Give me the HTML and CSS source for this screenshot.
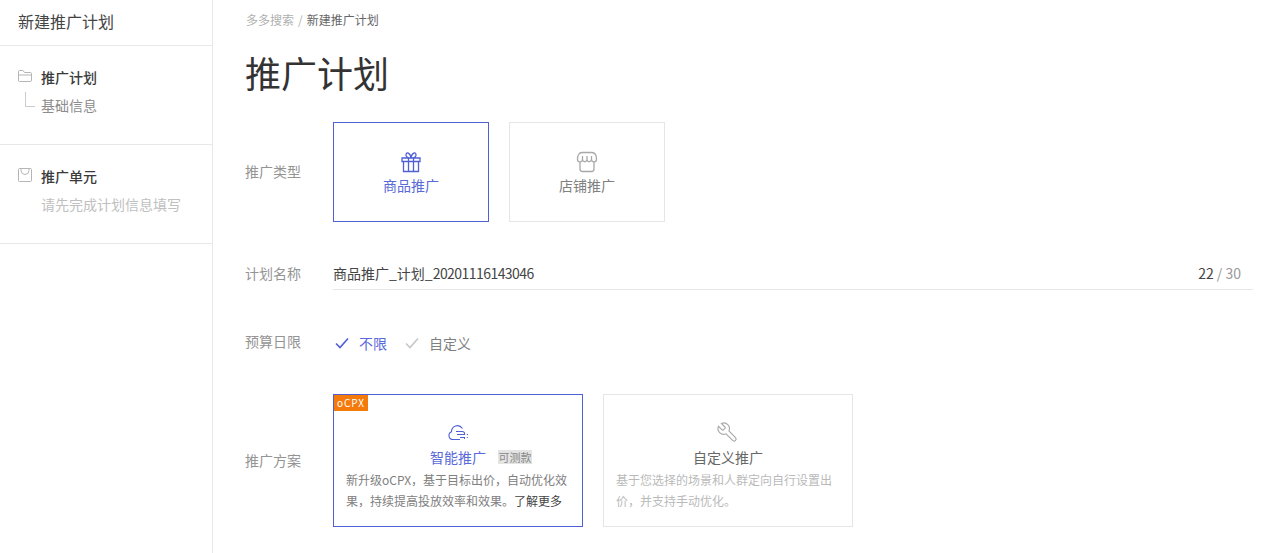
FILE: index.html
```html
<!DOCTYPE html>
<html lang="zh-CN">

<head>
    <meta charset="UTF-8">
    <title>新建推广计划</title>
    <link rel="stylesheet" href="styles.css">
</head>

<body>
    <div class="layout">
        <aside class="sidebar">
            <div class="side-title">新建推广计划</div>
            <div class="side-group">
                <div class="side-row">
                    <svg class="side-icon" viewBox="0 0 14 12" width="14" height="12" fill="none" stroke="#b5b5b5">
                        <path d="M.5 10V1.500Q.5.500 1.500.500H5L6.500 2.500H12.500Q13.500 2.500 13.500 3.500V10Q13.500 11.500 12.500 11.500H1.500Q.5 11.500 .5 10ZM.5 5H13.500" />
                    </svg>
                    <span class="side-name">推广计划</span>
                </div>
                <div class="side-row side-sub">
                    <span class="tree-line"></span>
                    <span class="side-text">基础信息</span>
                </div>
            </div>
            <div class="side-group">
                <div class="side-row">
                    <svg class="side-icon" viewBox="0 0 14 14" width="14" height="14" fill="none" stroke="#b5b5b5">
                        <path d="M1.500.5H12.500Q13.500.5 13.500 1.500V12.500Q13.500 13.500 12.500 13.500H1.500Q.5 13.500 .5 12.500V1.500Q.5.5 1.500.5ZM3 1V2.500Q3.500 6.500 7 6.500T11 2.500V1" />
                    </svg>
                    <span class="side-name">推广单元</span>
                </div>
                <div class="side-row side-sub">
                    <span class="side-text side-hint">请先完成计划信息填写</span>
                </div>
            </div>
        </aside>

        <main class="content">
            <div class="breadcrumb"><span>多多搜索</span><i>/</i><em>新建推广计划</em></div>
            <h1>推广计划</h1>

            <div class="form-row type-row">
                <label>推广类型</label>
                <div class="type-cards">
                    <div class="type-card active">
                        <svg viewBox="0 0 22 22" width="22" height="22" fill="none" stroke="#4f5fd5" stroke-width="1.300">
                            <path d="M2 7H20V10.500H2ZM3.500 10.500V20.500H18.500V10.500M8.500 7V20.500M13.500 7V20.500M11 7C7.500 7 5.500 5.500 6 3.500C6.500 1 10 1 11 7C12 1 15.500 1 16 3.500C16.500 5.500 14.500 7 11 7Z" />
                        </svg>
                        <span>商品推广</span>
                    </div>
                    <div class="type-card">
                        <svg viewBox="0 0 22 22" width="22" height="22" fill="none" stroke="#a8a8a8" stroke-width="1.300">
                            <path d="M6 1.500H16C19 1.500 20.500 4.500 20.500 8.500C20.500 11.500 16 12 15.500 8.500C15 11.500 11.500 11.500 11 8.500C10.500 11.500 7 11.500 6.500 8.500C6 12 1.500 11.500 1.500 8.500C1.500 4.500 3 1.500 6 1.500ZM6.500 8.500V5M11 8.500V5M15.500 8.500V5M4 11V18Q4 20.500 6.500 20.500H15.500Q18 20.500 18 18V11" />
                        </svg>
                        <span>店铺推广</span>
                    </div>
                </div>
            </div>

            <div class="form-row name-row">
                <label>计划名称</label>
                <div class="name-input">
                    <span>商品推广_计划_<span class="digits">20201116143046</span></span>
                    <span class="count"><b>22</b> / 30</span>
                </div>
            </div>

            <div class="form-row budget-row">
                <label>预算日限</label>
                <div class="checks">
                    <div class="check active">
                        <svg viewBox="0 0 14 12" width="14" height="12" fill="none" stroke="#4f5fd5" stroke-width="1.600">
                            <path d="M1 6.500L5 10.500L13 1.500" />
                        </svg>
                        <span>不限</span>
                    </div>
                    <div class="check">
                        <svg viewBox="0 0 14 12" width="14" height="12" fill="none" stroke="#c4c8c8" stroke-width="1.600">
                            <path d="M1 6.500L5 10.500L13 1.500" />
                        </svg>
                        <span>自定义</span>
                    </div>
                </div>
            </div>

            <div class="form-row plan-row">
                <label>推广方案</label>
                <div class="plan-cards">
                    <div class="plan-card active">
                        <span class="badge">oCPX</span>
                        <svg viewBox="0 -3 20 20" width="20" height="20" fill="none" stroke="#4f5fd5" stroke-width="1.100">
                            <path d="M12 15.500H5C.5 15.500-.5 9.500 3.500 7.800C3.500 2.500 10.500-1 14.500 4.500M8 7.500H14C16 7.500 17 8.800 16.500 10.500H9M12 13.500H16.500V15M18.800 10.500H20M18.800 13.500H19.800" />
                        </svg>
                        <div class="plan-title">智能推广<span class="tag">可测款</span></div>
                        <p>新升级oCPX，基于目标出价，自动优化效果，持续提高投放效率和效果。<a>了解更多</a></p>
                    </div>
                    <div class="plan-card">
                        <svg viewBox="2 0 21 21" width="20" height="20" fill="none" stroke="#a8a8a8" stroke-width="1.200">
                            <path transform="matrix(-1 0 0 1 24 0)" d="M14.700 6.300a1 1 0 0 0 0 1.400l1.600 1.600a1 1 0 0 0 1.400 0l3.770-3.770a6 6 0 0 1-7.940 7.940l-6.910 6.910a2.120 2.120 0 0 1-3-3l6.910-6.910a6 6 0 0 1 7.940-7.940l-3.760 3.760z" />
                        </svg>
                        <div class="plan-title">自定义推广</div>
                        <p class="muted">基于您选择的场景和人群定向自行设置出价，并支持手动优化。</p>
                    </div>
                </div>
            </div>
        </main>
    </div>
</body>

</html>
```
FILE: styles.css
```css
* {
    box-sizing: border-box;
}

html,
body {
    height: 100%;
}

body {
    margin: 0;
    overflow: hidden;
    background: #fff;
    color: #666;
    font-family: "Noto Sans CJK SC", "Noto Sans", sans-serif;
    font-size: 14px;
}

.layout {
    display: flex;
    height: 553px;
}

.sidebar {
    width: 213px;
    flex-shrink: 0;
    border-right: 1px solid #e8e8e8;
}

.side-title {
    height: 46px;
    padding: 0 18px;
    line-height: 43px;
    font-size: 16px;
    color: #444;
    border-bottom: 1px solid #e8e8e8;
}

.side-group {
    height: 99px;
    padding-top: 17px;
    border-bottom: 1px solid #e8e8e8;
}

.side-row {
    display: flex;
    align-items: center;
    height: 28px;
    padding-left: 18px;
}

.side-icon {
    width: 14px;
    margin-right: 9px;
    margin-top: -2px;
}

.side-name {
    color: #3a3a3a;
    font-weight: 500;
}

.side-sub {
    position: relative;
    padding-left: 41px;
}

.tree-line {
    position: absolute;
    left: 25px;
    top: 1px;
    width: 10px;
    height: 15px;
    border-left: 1px solid #ccc;
    border-bottom: 1px solid #ccc;
}

.side-text {
    color: #8c8c8c;
}

.side-hint {
    color: #c0c0c0;
}

.content {
    flex: 1;
    padding: 0 31px 0 32px;
}

.breadcrumb {
    height: 40px;
    padding: 11px 0 0 1px;
    font-size: 12px;
    line-height: 17px;
    color: #b0b0b0;
}

.breadcrumb i {
    font-style: normal;
    margin: 0 4px;
}

.breadcrumb em {
    font-style: normal;
    color: #666;
}

h1 {
    margin: 0;
    height: 82px;
    font-size: 36px;
    font-weight: 400;
    line-height: 64px;
    color: #333;
}

.form-row {
    display: flex;
    align-items: center;
}

.form-row label {
    width: 88px;
    flex-shrink: 0;
    color: #949494;
}

.type-row {
    height: 100px;
}

.type-row label {
    margin-top: -3px;
}

.type-cards {
    display: flex;
    gap: 20px;
}

.type-card {
    width: 156px;
    height: 100px;
    display: flex;
    flex-direction: column;
    align-items: center;
    padding-top: 28px;
    border: 1px solid #e6e6e6;
    color: #808080;
}

.type-card span {
    line-height: 20px;
    margin-top: 2px;
}

.type-card.active {
    border-color: #4f5fd5;
    color: #5a69d8;
}

.name-row {
    height: 34px;
    margin-top: 34px;
}

.name-input {
    flex: 1;
    height: 34px;
    padding: 0 12px 0 0;
    display: flex;
    justify-content: space-between;
    align-items: center;
    border-bottom: 1px solid #e6e6e6;
    color: #444;
}

.digits {
    letter-spacing: -0.55px;
}

.count {
    color: #999;
}

.count b {
    font-weight: 400;
    color: #444;
}

.budget-row {
    height: 22px;
    margin-top: 42px;
}

.budget-row label {
    margin-top: -5px;
}

.checks {
    display: flex;
    gap: 18px;
    margin-left: 2px;
}

.check {
    display: flex;
    align-items: center;
    gap: 10px;
    color: #808080;
}

.check.active {
    color: #5a69d8;
}

.plan-row {
    margin-top: 40px;
}

.plan-row label {
    margin-top: -2px;
}

.plan-cards {
    display: flex;
    gap: 20px;
}

.plan-card {
    position: relative;
    width: 250px;
    height: 133px;
    padding: 26px 12px 0;
    border: 1px solid #e6e6e6;
    text-align: center;
    color: #666;
}

.plan-card svg {
    display: block;
    margin: 0 auto;
    overflow: visible;
}

.plan-card.active {
    border-color: #4f5fd5;
}

.plan-card.active .plan-title {
    color: #5a69d8;
}

.plan-title {
    position: relative;
    line-height: 20px;
    margin-top: 6px;
}

.tag {
    position: absolute;
    left: 152px;
    top: 3px;
    width: 34px;
    height: 14px;
    background: #e4e4e4;
    color: #888;
    font-size: 11px;
    line-height: 14px;
    text-align: center;
}

.plan-card p {
    margin: 2px 0 0;
    font-size: 12px;
    line-height: 21px;
    text-align: left;
    color: #808080;
}

.plan-card p a {
    color: #444;
}

.plan-card p.muted {
    color: #bababa;
}

.badge {
    position: absolute;
    left: 0;
    top: 0;
    width: 34px;
    height: 16px;
    background: #f57a0c;
    color: #fff;
    font-size: 10px;
    line-height: 15px;
    text-align: center;
    letter-spacing: 1px;
}
```
